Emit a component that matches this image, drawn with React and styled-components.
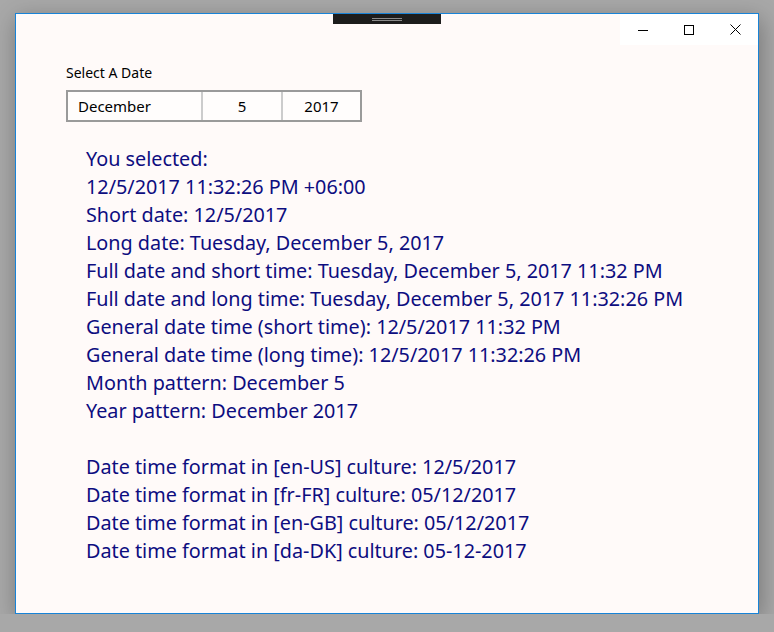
import React from 'react';
import styled, { createGlobalStyle } from 'styled-components';

const GlobalStyle = createGlobalStyle`
  html, body {
    margin: 0;
    padding: 0;
    background: #a8a8a8;
  }
  body {
    padding: 13px 0 0 15px;
    font-family: "Noto Sans", "Open Sans", sans-serif;
  }
`;

const Window = styled.div`
  position: relative;
  box-sizing: border-box;
  width: 744px;
  height: 601px;
  background: #fffaf9;
  border: 1px solid #1883d7;
  box-shadow: 2px 6px 22px rgba(0, 0, 0, 0.3);
`;

const TitleBar = styled.div`
  display: flex;
  justify-content: flex-end;
  height: 31px;
`;

const Controls = styled.div`
  display: flex;
  background: #ffffff;
`;

const CaptionButton = styled.div`
  width: 46px;
  height: 31px;
  display: flex;
  align-items: center;
  justify-content: center;
`;

const DragHandle = styled.div`
  position: absolute;
  top: 0;
  left: 50%;
  transform: translateX(-50%);
  width: 108px;
  height: 10px;
  background: #1c1c1c;
  display: flex;
  flex-direction: column;
  align-items: center;
  justify-content: center;
  gap: 1px;
`;

const Grip = styled.div`
  width: 30px;
  height: 1px;
  background: #8a8a8a;
`;

const Content = styled.div`
  padding: 19px 0 0 50px;
`;

const Label = styled.div`
  font-size: 14px;
  line-height: 18px;
  color: #000;
  margin-bottom: 8px;
`;

const Picker = styled.div`
  display: flex;
  box-sizing: border-box;
  width: 296px;
  height: 32px;
  border: 2px solid #9a9a9a;
  background: #fffdfc;
`;

const Part = styled.div`
  box-sizing: border-box;
  width: ${p => p.w}px;
  display: flex;
  align-items: center;
  justify-content: ${p => (p.left ? 'flex-start' : 'center')};
  padding-left: ${p => (p.left ? '10px' : '0')};
  font-size: 15px;
  color: #000;
  border-left: ${p => (p.first ? 'none' : '2px solid #cccccc')};
`;

const Results = styled.div`
  margin: 23px 0 0 20px;
  color: #0d0d80;
  font-size: 19.8px;
  line-height: 28px;
`;

const Line = styled.div`
  white-space: nowrap;
  min-height: 28px;
`;

const lines = [
  'You selected:',
  '12/5/2017 11:32:26 PM +06:00',
  'Short date: 12/5/2017',
  'Long date: Tuesday, December 5, 2017',
  'Full date and short time: Tuesday, December 5, 2017 11:32 PM',
  'Full date and long time: Tuesday, December 5, 2017 11:32:26 PM',
  'General date time (short time): 12/5/2017 11:32 PM',
  'General date time (long time): 12/5/2017 11:32:26 PM',
  'Month pattern: December 5',
  'Year pattern: December 2017',
  '',
  'Date time format in [en-US] culture: 12/5/2017',
  'Date time format in [fr-FR] culture: 05/12/2017',
  'Date time format in [en-GB] culture: 05/12/2017',
  'Date time format in [da-DK] culture: 05-12-2017',
];

export default function App() {
  return (
    <>
      <GlobalStyle />
      <Window>
        <DragHandle>
          <Grip />
          <Grip />
        </DragHandle>
        <TitleBar>
          <Controls>
            <CaptionButton>
              <svg width="10" height="10" viewBox="0 0 10 10">
                <path d="M0 5.5h10" stroke="#000" strokeWidth="1" />
              </svg>
            </CaptionButton>
            <CaptionButton>
              <svg width="10" height="10" viewBox="0 0 10 10">
                <rect x="0.5" y="0.5" width="9" height="9" fill="none" stroke="#000" strokeWidth="1" />
              </svg>
            </CaptionButton>
            <CaptionButton>
              <svg width="11" height="11" viewBox="0 0 11 11">
                <path d="M0.5 0.5l10 10M10.5 0.5l-10 10" stroke="#000" strokeWidth="1" />
              </svg>
            </CaptionButton>
          </Controls>
        </TitleBar>
        <Content>
          <Label>Select A Date</Label>
          <Picker>
            <Part w={133} first left>December</Part>
            <Part w={80}>5</Part>
            <Part w={79}>2017</Part>
          </Picker>
          <Results>
            {lines.map((t, i) => (
              <Line key={i}>{t}</Line>
            ))}
          </Results>
        </Content>
      </Window>
    </>
  );
}
